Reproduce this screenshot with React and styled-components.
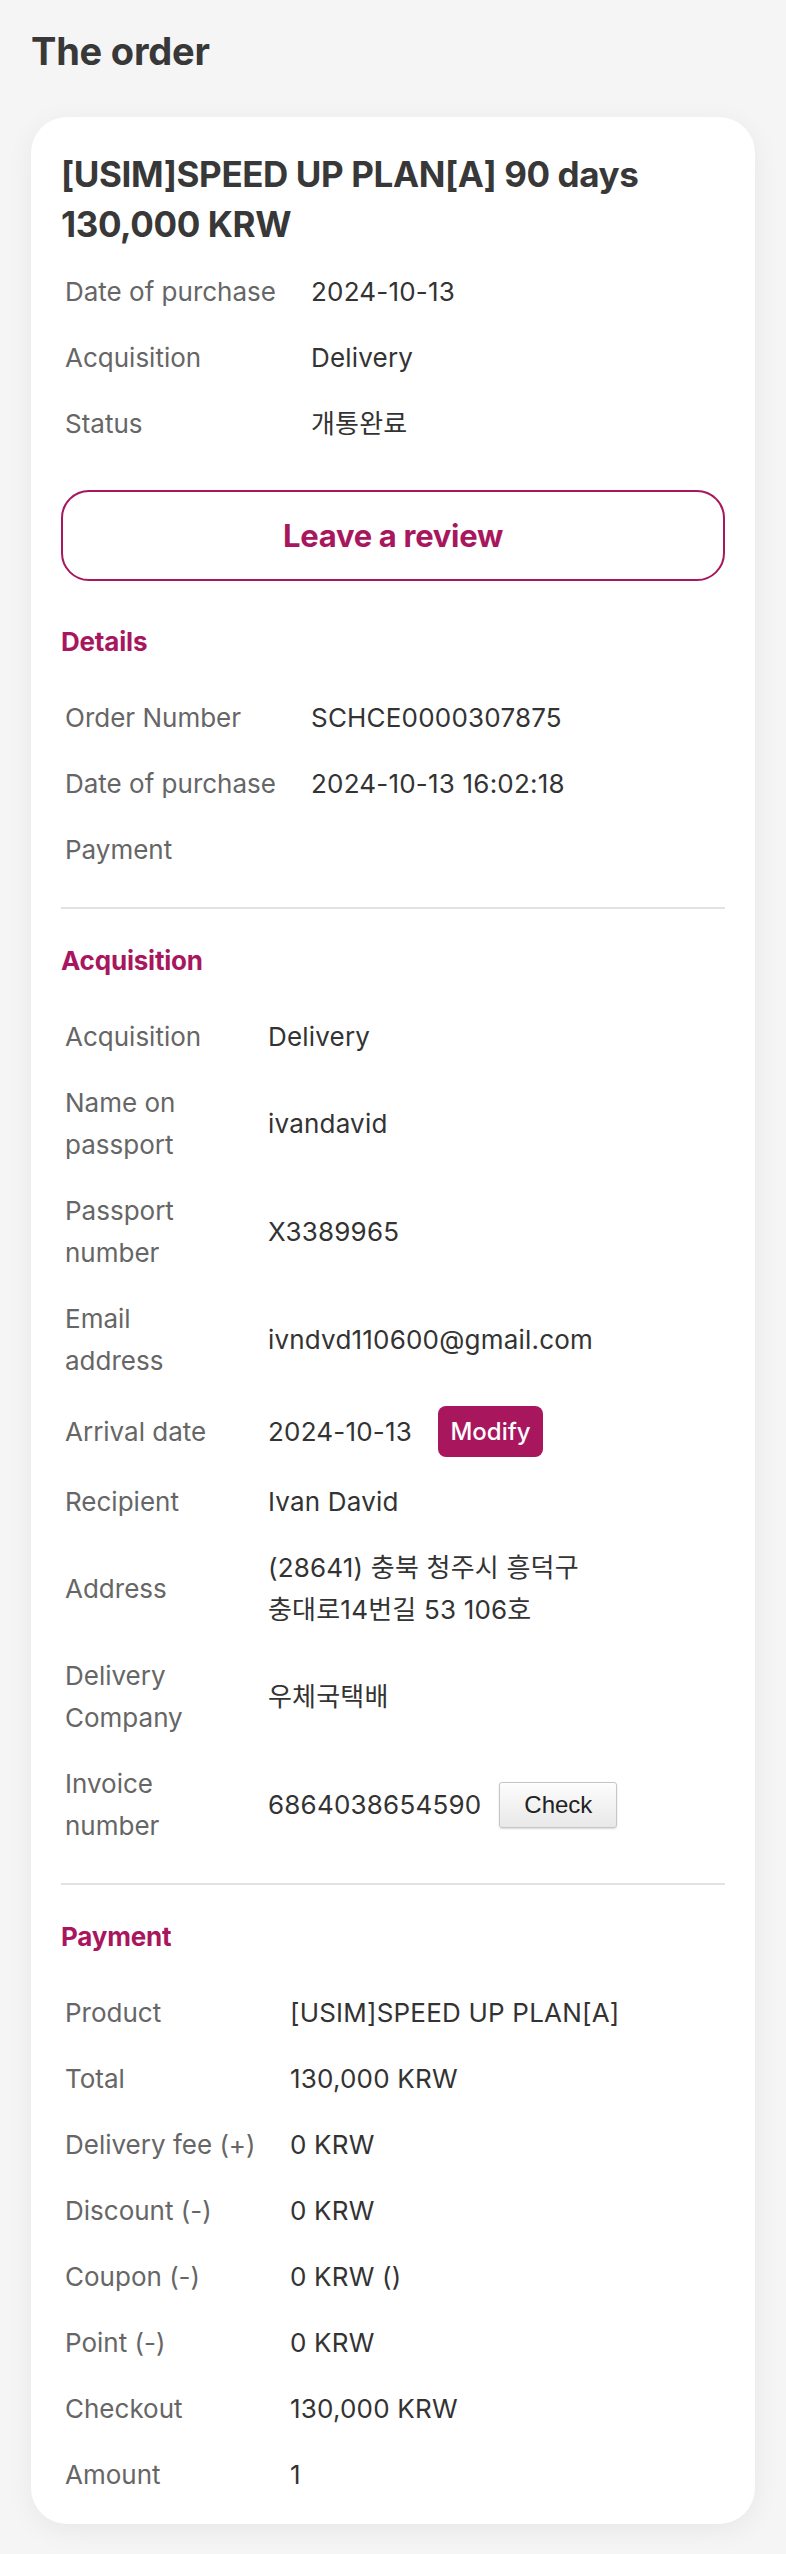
import React from "react";
import styled, { createGlobalStyle } from "styled-components";

const MAGENTA = "#a8175e";

const GlobalStyle = createGlobalStyle`
  html, body {
    margin: 0;
    padding: 0;
    background: #f5f5f5;
  }
  body {
    font-family: Inter, "Noto Sans CJK KR", "Noto Sans", sans-serif;
    color: #333;
    -webkit-font-smoothing: antialiased;
  }
  * { box-sizing: border-box; }
`;

const Page = styled.main`
  padding: 28px 31px 25px;
`;

const PageTitle = styled.h1`
  margin: 0 0 43px;
  font-size: 38px;
  line-height: 46px;
  font-weight: 700;
  color: #383838;
  letter-spacing: -0.2px;
`;

const Card = styled.section`
  background: #fff;
  border-radius: 36px;
  padding: 32px 30px 16px;
  box-shadow: 0 6px 28px rgba(0, 0, 0, 0.06);
`;

const ProductTitle = styled.h2`
  margin: 0;
  font-size: 35px;
  line-height: 50px;
  font-weight: 700;
  color: #383838;
  letter-spacing: -0.4px;
`;

const InfoList = styled.dl`
  margin: ${(p) => p.$top || 0}px 0 0;
  display: grid;
  grid-template-columns: ${(p) => p.$labelWidth}px 1fr;
  font-size: 26px;
  line-height: 42px;
`;

const Label = styled.dt`
  margin: 0;
  padding: 12px ${(p) => p.$padRight || 10}px 12px 4px;
  color: #666;
  display: flex;
  align-items: center;
`;

const Value = styled.dd`
  margin: 0;
  padding: 12px 0;
  color: #333;
  display: flex;
  align-items: center;
  word-break: keep-all;
  letter-spacing: 0.2px;
`;

const ValueText = styled.span`
  max-width: ${(p) => (p.$max ? `${p.$max}px` : "none")};
`;

const ReviewButton = styled.button`
  display: block;
  width: 100%;
  height: 91px;
  margin-top: 33px;
  border: 2px solid ${MAGENTA};
  border-radius: 28px;
  background: #fff;
  color: ${MAGENTA};
  font-family: Inter, sans-serif;
  font-size: 31px;
  font-weight: 700;
  letter-spacing: -0.3px;
  cursor: pointer;
`;

const SectionTitle = styled.h3`
  margin: ${(p) => p.$top}px 0 0;
  font-size: 26px;
  line-height: 42px;
  font-weight: 700;
  color: ${MAGENTA};
  letter-spacing: -0.2px;
`;

const Divider = styled.hr`
  margin: 24px 0 31px;
  border: 0;
  height: 2px;
  background: #e2e2e2;
`;

const ModifyButton = styled.button`
  margin-left: 26px;
  width: 105px;
  height: 51px;
  border: 0;
  border-radius: 8px;
  background: ${MAGENTA};
  color: #fff;
  font-family: Inter, sans-serif;
  font-size: 24px;
  font-weight: 500;
  letter-spacing: 0;
  padding: 0;
  cursor: pointer;
`;

const CheckButton = styled.button`
  margin-left: 18px;
  width: 118px;
  height: 46px;
  border: 1px solid #c6c6c6;
  border-radius: 3px;
  background: linear-gradient(#fdfdfd, #e8e8e8);
  box-shadow: 0 1px 2px rgba(0, 0, 0, 0.15);
  color: #222;
  font-family: "Liberation Sans", Arial, sans-serif;
  font-size: 24px;
  letter-spacing: 0;
  padding: 0;
  cursor: pointer;
`;

const Row = ({ label, children, padRight }) => (
  <>
    <Label $padRight={padRight}>{label}</Label>
    <Value>{children}</Value>
  </>
);

const acquisitionRows = [
  ["Acquisition", "Delivery"],
  ["Name on passport", "ivandavid"],
  ["Passport number", "X3389965"],
  ["Email address", "ivndvd110600@gmail.com"],
];

const paymentRows = [
  ["Product", "[USIM]SPEED UP PLAN[A]"],
  ["Total", "130,000 KRW"],
  ["Delivery fee (+)", "0 KRW"],
  ["Discount (-)", "0 KRW"],
  ["Coupon (-)", "0 KRW ()"],
  ["Point (-)", "0 KRW"],
  ["Checkout", "130,000 KRW"],
  ["Amount", "1"],
];

const ACQ_PAD = 48;

export default function App() {
  return (
    <>
      <GlobalStyle />
      <Page>
        <PageTitle>The order</PageTitle>
        <Card>
          <ProductTitle>
            [USIM]SPEED UP PLAN[A] 90 days
            <br />
            130,000 KRW
          </ProductTitle>
          <InfoList $labelWidth={250} $top={10}>
            <Row label="Date of purchase">2024-10-13</Row>
            <Row label="Acquisition">Delivery</Row>
            <Row label="Status">개통완료</Row>
          </InfoList>

          <ReviewButton type="button">Leave a review</ReviewButton>

          <SectionTitle $top={40}>Details</SectionTitle>
          <InfoList $labelWidth={250} $top={22}>
            <Row label="Order Number">SCHCE0000307875</Row>
            <Row label="Date of purchase">2024-10-13 16:02:18</Row>
            <Row label="Payment"></Row>
          </InfoList>

          <Divider />

          <SectionTitle $top={0}>Acquisition</SectionTitle>
          <InfoList $labelWidth={207} $top={22}>
            {acquisitionRows.map(([l, v]) => (
              <Row key={l} label={l} padRight={ACQ_PAD}>
                {v}
              </Row>
            ))}
            <Row label="Arrival date" padRight={ACQ_PAD}>
              2024-10-13
              <ModifyButton type="button">Modify</ModifyButton>
            </Row>
            <Row label="Recipient" padRight={ACQ_PAD}>
              Ivan David
            </Row>
            <Row label="Address" padRight={ACQ_PAD}>
              <ValueText $max={330}>(28641) 충북 청주시 흥덕구 충대로14번길 53 106호</ValueText>
            </Row>
            <Row label="Delivery Company" padRight={ACQ_PAD}>
              우체국택배
            </Row>
            <Row label="Invoice number" padRight={ACQ_PAD}>
              6864038654590
              <CheckButton type="button">Check</CheckButton>
            </Row>
          </InfoList>

          <Divider />

          <SectionTitle $top={0}>Payment</SectionTitle>
          <InfoList $labelWidth={229} $top={22}>
            {paymentRows.map(([l, v]) => (
              <Row key={l} label={l}>
                {v}
              </Row>
            ))}
          </InfoList>
        </Card>
      </Page>
    </>
  );
}
